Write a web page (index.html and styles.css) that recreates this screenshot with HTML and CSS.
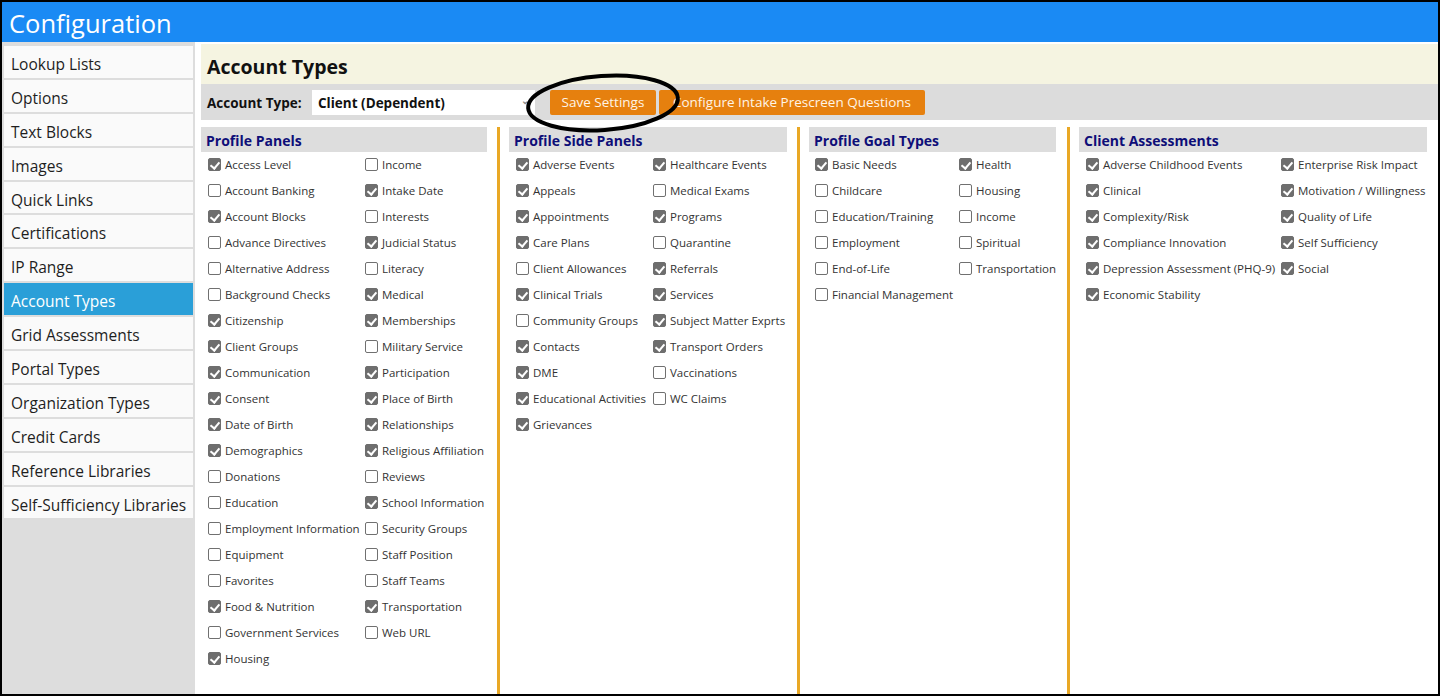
FILE: index.html
```html
<!DOCTYPE html>
<html>
<head>
<meta charset="utf-8">
<link rel="stylesheet" href="styles.css">
</head>
<body>
<div class="frame">
  <header class="topbar">Configuration</header>
  <div class="body">
    <nav class="sidebar">
      <div class="nav-item">Lookup Lists</div>
      <div class="nav-item">Options</div>
      <div class="nav-item">Text Blocks</div>
      <div class="nav-item">Images</div>
      <div class="nav-item">Quick Links</div>
      <div class="nav-item">Certifications</div>
      <div class="nav-item">IP Range</div>
      <div class="nav-item active">Account Types</div>
      <div class="nav-item">Grid Assessments</div>
      <div class="nav-item">Portal Types</div>
      <div class="nav-item">Organization Types</div>
      <div class="nav-item">Credit Cards</div>
      <div class="nav-item">Reference Libraries</div>
      <div class="nav-item">Self-Sufficiency Libraries</div>
    </nav>
    <main class="main">
      <div class="title-bar">Account Types</div>
      <div class="toolbar">
        <span class="tb-label">Account Type:</span>
        <div class="select"><span>Client (Dependent)</span><span class="arrow">&#x2304;</span></div>
        <button class="btn btn-save">Save Settings</button>
        <button class="btn btn-config">Configure Intake Prescreen Questions</button>
      </div>
      <div class="columns">
        <section class="panel p1">
          <h2 class="panel-head">Profile Panels</h2>
          <div class="list">
            <div class="opt"><span class="cb on"></span>Access Level</div>
            <div class="opt"><span class="cb"></span>Income</div>
            <div class="opt"><span class="cb"></span>Account Banking</div>
            <div class="opt"><span class="cb on"></span>Intake Date</div>
            <div class="opt"><span class="cb on"></span>Account Blocks</div>
            <div class="opt"><span class="cb"></span>Interests</div>
            <div class="opt"><span class="cb"></span>Advance Directives</div>
            <div class="opt"><span class="cb on"></span>Judicial Status</div>
            <div class="opt"><span class="cb"></span>Alternative Address</div>
            <div class="opt"><span class="cb"></span>Literacy</div>
            <div class="opt"><span class="cb"></span>Background Checks</div>
            <div class="opt"><span class="cb on"></span>Medical</div>
            <div class="opt"><span class="cb on"></span>Citizenship</div>
            <div class="opt"><span class="cb on"></span>Memberships</div>
            <div class="opt"><span class="cb on"></span>Client Groups</div>
            <div class="opt"><span class="cb"></span>Military Service</div>
            <div class="opt"><span class="cb on"></span>Communication</div>
            <div class="opt"><span class="cb on"></span>Participation</div>
            <div class="opt"><span class="cb on"></span>Consent</div>
            <div class="opt"><span class="cb on"></span>Place of Birth</div>
            <div class="opt"><span class="cb on"></span>Date of Birth</div>
            <div class="opt"><span class="cb on"></span>Relationships</div>
            <div class="opt"><span class="cb on"></span>Demographics</div>
            <div class="opt"><span class="cb on"></span>Religious Affiliation</div>
            <div class="opt"><span class="cb"></span>Donations</div>
            <div class="opt"><span class="cb"></span>Reviews</div>
            <div class="opt"><span class="cb"></span>Education</div>
            <div class="opt"><span class="cb on"></span>School Information</div>
            <div class="opt"><span class="cb"></span>Employment Information</div>
            <div class="opt"><span class="cb"></span>Security Groups</div>
            <div class="opt"><span class="cb"></span>Equipment</div>
            <div class="opt"><span class="cb"></span>Staff Position</div>
            <div class="opt"><span class="cb"></span>Favorites</div>
            <div class="opt"><span class="cb"></span>Staff Teams</div>
            <div class="opt"><span class="cb on"></span>Food &amp; Nutrition</div>
            <div class="opt"><span class="cb on"></span>Transportation</div>
            <div class="opt"><span class="cb"></span>Government Services</div>
            <div class="opt"><span class="cb"></span>Web URL</div>
            <div class="opt"><span class="cb on"></span>Housing</div>
          </div>
        </section>
        <section class="panel p2">
          <h2 class="panel-head">Profile Side Panels</h2>
          <div class="list">
            <div class="opt"><span class="cb on"></span>Adverse Events</div>
            <div class="opt"><span class="cb on"></span>Healthcare Events</div>
            <div class="opt"><span class="cb on"></span>Appeals</div>
            <div class="opt"><span class="cb"></span>Medical Exams</div>
            <div class="opt"><span class="cb on"></span>Appointments</div>
            <div class="opt"><span class="cb on"></span>Programs</div>
            <div class="opt"><span class="cb on"></span>Care Plans</div>
            <div class="opt"><span class="cb"></span>Quarantine</div>
            <div class="opt"><span class="cb"></span>Client Allowances</div>
            <div class="opt"><span class="cb on"></span>Referrals</div>
            <div class="opt"><span class="cb on"></span>Clinical Trials</div>
            <div class="opt"><span class="cb on"></span>Services</div>
            <div class="opt"><span class="cb"></span>Community Groups</div>
            <div class="opt"><span class="cb on"></span>Subject Matter Exprts</div>
            <div class="opt"><span class="cb on"></span>Contacts</div>
            <div class="opt"><span class="cb on"></span>Transport Orders</div>
            <div class="opt"><span class="cb on"></span>DME</div>
            <div class="opt"><span class="cb"></span>Vaccinations</div>
            <div class="opt"><span class="cb on"></span>Educational Activities</div>
            <div class="opt"><span class="cb"></span>WC Claims</div>
            <div class="opt"><span class="cb on"></span>Grievances</div>
          </div>
        </section>
        <section class="panel p3">
          <h2 class="panel-head">Profile Goal Types</h2>
          <div class="list">
            <div class="opt"><span class="cb on"></span>Basic Needs</div>
            <div class="opt"><span class="cb on"></span>Health</div>
            <div class="opt"><span class="cb"></span>Childcare</div>
            <div class="opt"><span class="cb"></span>Housing</div>
            <div class="opt"><span class="cb"></span>Education/Training</div>
            <div class="opt"><span class="cb"></span>Income</div>
            <div class="opt"><span class="cb"></span>Employment</div>
            <div class="opt"><span class="cb"></span>Spiritual</div>
            <div class="opt"><span class="cb"></span>End-of-Life</div>
            <div class="opt"><span class="cb"></span>Transportation</div>
            <div class="opt"><span class="cb"></span>Financial Management</div>
          </div>
        </section>
        <section class="panel p4">
          <h2 class="panel-head">Client Assessments</h2>
          <div class="list">
            <div class="opt"><span class="cb on"></span>Adverse Childhood Events</div>
            <div class="opt"><span class="cb on"></span>Enterprise Risk Impact</div>
            <div class="opt"><span class="cb on"></span>Clinical</div>
            <div class="opt"><span class="cb on"></span>Motivation / Willingness</div>
            <div class="opt"><span class="cb on"></span>Complexity/Risk</div>
            <div class="opt"><span class="cb on"></span>Quality of Life</div>
            <div class="opt"><span class="cb on"></span>Compliance Innovation</div>
            <div class="opt"><span class="cb on"></span>Self Sufficiency</div>
            <div class="opt"><span class="cb on"></span>Depression Assessment (PHQ-9)</div>
            <div class="opt"><span class="cb on"></span>Social</div>
            <div class="opt"><span class="cb on"></span>Economic Stability</div>
          </div>
        </section>
      </div>
    </main>
  </div>
  <svg class="annotation" width="170" height="70" viewBox="0 0 170 70">
    <ellipse cx="85" cy="35" rx="75" ry="27" fill="none" stroke="#000" stroke-width="4" transform="rotate(-4 85 35)"/>
  </svg>
</div>
</body>
</html>
```

FILE: styles.css
```css
* { box-sizing: border-box; }
html, body { margin: 0; padding: 0; }
body {
  font-family: "Open Sans", "Noto Sans", sans-serif;
  color: #222;
  background: #fff;
}
.frame {
  position: relative;
  width: 1440px;
  height: 696px;
  border: 2px solid #000;
  display: flex;
  flex-direction: column;
  overflow: hidden;
}
.topbar {
  height: 40px;
  background: #1a8af4;
  color: #fff;
  font-size: 25.5px;
  line-height: 42px;
  padding-left: 7px;
  flex: none;
}
.body {
  flex: 1;
  display: flex;
  min-height: 0;
}
.sidebar {
  width: 193px;
  flex: none;
  background: #dddddd;
  padding: 4px 2px 0 2px;
  display: flex;
  flex-direction: column;
  gap: 2px;
}
.nav-item {
  height: 31.9px;
  background: #fafafa;
  font-size: 15.5px;
  line-height: 31px;
  padding-top: 3px;
  padding-left: 7px;
  color: #1e1e1e;
  white-space: nowrap;
}
.nav-item.active {
  background: #2a9fd8;
  color: #fff;
}
.main {
  flex: 1;
  display: flex;
  flex-direction: column;
  padding: 2px 0 0 6px;
  min-width: 0;
}
.title-bar {
  height: 40px;
  background: #f5f4e1;
  font-weight: 700;
  font-size: 19.5px;
  line-height: 45px;
  padding-left: 6px;
  color: #111;
  flex: none;
}
.toolbar {
  height: 36px;
  background: #dcdcdc;
  display: flex;
  align-items: center;
  padding-left: 6px;
  flex: none;
}
.tb-label {
  font-weight: 700;
  font-size: 13.5px;
  color: #111;
  width: 105px;
  padding-top: 1px;
}
.select {
  width: 223px;
  height: 25px;
  background: #fff;
  display: flex;
  align-items: center;
  justify-content: space-between;
  padding: 1px 6px 0 6px;
  font-weight: 700;
  font-size: 13.5px;
  color: #111;
}
.select .arrow {
  font-size: 10px;
  color: #888;
  line-height: 10px;
  margin-top: -6px;
}
.btn {
  height: 25px;
  border: none;
  border-radius: 2px;
  background: #e6800e;
  color: #fff4e6;
  font-family: inherit;
  font-size: 13.5px;
  padding: 0;
  margin-left: 3px;
  cursor: pointer;
}
.btn-save {
  margin-left: 15px;
  width: 106px;
}
.btn-config {
  width: 266px;
}
.columns {
  flex: 1;
  display: grid;
  grid-template-columns: 296px 300px 270px 1fr;
  margin-top: 7px;
  min-height: 0;
}
.panel {
  padding-right: 10px;
}
.p2, .p3, .p4 {
  border-left: 3px solid #e9a825;
  padding-left: 9px;
}
.p3 { padding-right: 11px; }
.p4 { padding-right: 11px; }
.panel-head {
  margin: 0;
  height: 25px;
  background: #dddddd;
  color: #0e0e78;
  font-size: 14px;
  font-weight: 700;
  line-height: 27px;
  padding-left: 5px;
}
.list {
  display: grid;
  grid-auto-rows: 26px;
  padding-left: 7px;
  margin-top: -1px;
}
.p1 .list { grid-template-columns: 157px auto; }
.p2 .list { grid-template-columns: 137px auto; }
.p3 .list { grid-template-columns: 144px auto; padding-left: 6px; }
.p4 .list { grid-template-columns: 195px auto; }
.opt {
  display: flex;
  align-items: center;
  font-size: 11.5px;
  color: #333;
  white-space: nowrap;
}
.cb {
  position: relative;
  width: 13px;
  height: 13px;
  border: 1px solid #707070;
  border-radius: 2px;
  background: #fff;
  margin-right: 4px;
  flex: none;
}
.cb.on {
  background: #6e6e6e;
  border-color: #6e6e6e;
}
.cb.on::after {
  content: "";
  position: absolute;
  left: 3px;
  top: 1px;
  width: 4px;
  height: 7px;
  border-right: 2px solid #fff;
  border-bottom: 2px solid #fff;
  transform: rotate(40deg);
}
.annotation {
  position: absolute;
  left: 516px;
  top: 66px;
  pointer-events: none;
}
```
